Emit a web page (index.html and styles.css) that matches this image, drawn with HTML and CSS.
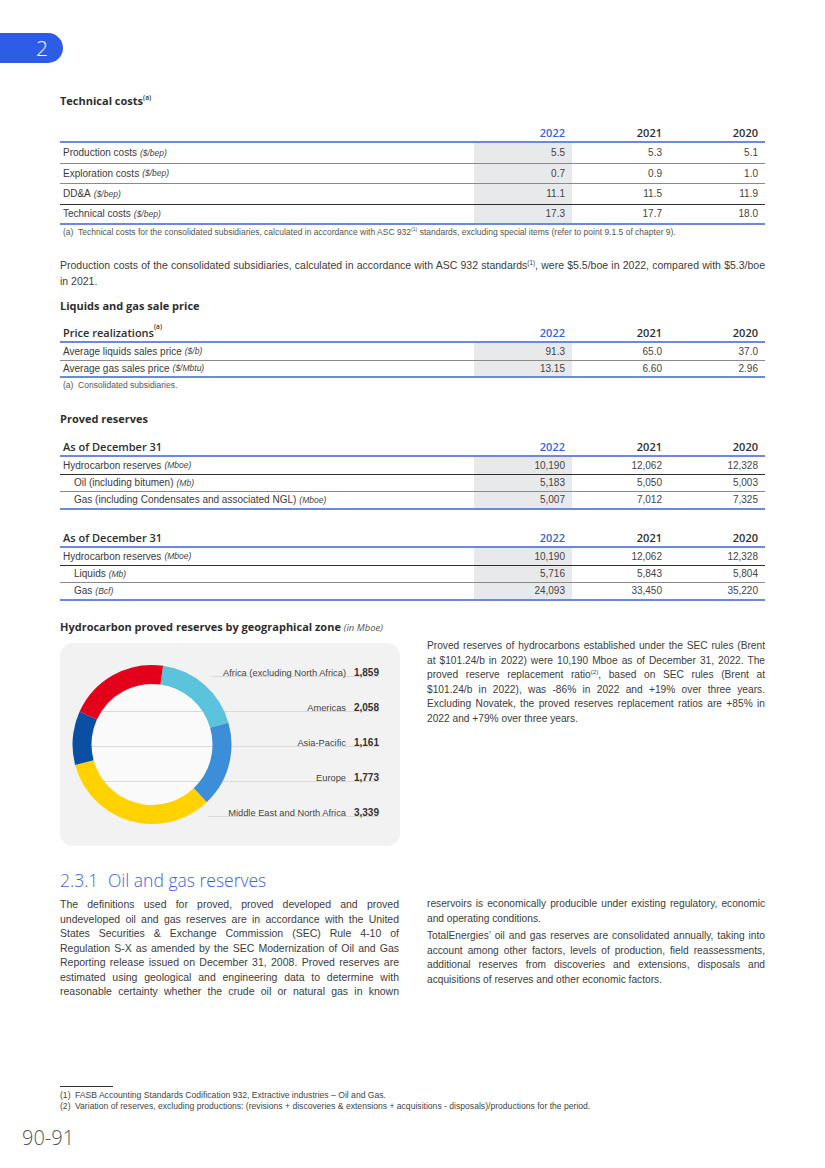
FILE: index.html
```html
<!DOCTYPE html>
<html lang="en">
<head>
<meta charset="utf-8">
<title>Oil and gas reserves</title>
<link rel="stylesheet" href="styles.css">
</head>
<body>
<div class="page">
  <div class="badge">2</div>

  <div class="content">
    <h3 class="h h-tech">Technical costs<sup>(a)</sup></h3>
    <div class="tbl t-tech">
      <div class="row head"><span class="lbl"></span><span class="c yr cur">2022</span><span class="c yr">2021</span><span class="c yr">2020</span></div>
      <div class="row"><span class="lbl">Production costs <i>($/bep)</i></span><span class="c cur">5.5</span><span class="c">5.3</span><span class="c">5.1</span></div>
      <div class="row"><span class="lbl">Exploration costs <i>($/bep)</i></span><span class="c cur">0.7</span><span class="c">0.9</span><span class="c">1.0</span></div>
      <div class="row dark"><span class="lbl">DD&amp;A <i>($/bep)</i></span><span class="c cur">11.1</span><span class="c">11.5</span><span class="c">11.9</span></div>
      <div class="row last"><span class="lbl">Technical costs <i>($/bep)</i></span><span class="c cur">17.3</span><span class="c">17.7</span><span class="c">18.0</span></div>
    </div>
    <p class="tnote">(a)&nbsp; Technical costs for the consolidated subsidiaries, calculated in accordance with ASC 932<sup>(1)</sup> standards, excluding special items (refer to point 9.1.5 of chapter 9).</p>

    <p class="para p-prod">Production costs of the consolidated subsidiaries, calculated in accordance with ASC 932 standards<sup>(1)</sup>, were $5.5/boe in 2022, compared with $5.3/boe in 2021.</p>

    <h3 class="h h-liq">Liquids and gas sale price</h3>
    <div class="tbl t-short t-price">
      <div class="row head"><span class="lbl">Price realizations<sup>(a)</sup></span><span class="c yr cur">2022</span><span class="c yr">2021</span><span class="c yr">2020</span></div>
      <div class="row"><span class="lbl">Average liquids sales price <i>($/b)</i></span><span class="c cur">91.3</span><span class="c">65.0</span><span class="c">37.0</span></div>
      <div class="row last"><span class="lbl">Average gas sales price <i>($/Mbtu)</i></span><span class="c cur">13.15</span><span class="c">6.60</span><span class="c">2.96</span></div>
    </div>
    <p class="tnote">(a)&nbsp; Consolidated subsidiaries.</p>

    <h3 class="h h-proved">Proved reserves</h3>
    <div class="tbl t-short t-res1">
      <div class="row head"><span class="lbl">As of December 31</span><span class="c yr cur">2022</span><span class="c yr">2021</span><span class="c yr">2020</span></div>
      <div class="row dark"><span class="lbl">Hydrocarbon reserves <i>(Mboe)</i></span><span class="c cur">10,190</span><span class="c">12,062</span><span class="c">12,328</span></div>
      <div class="row"><span class="lbl ind">Oil (including bitumen) <i>(Mb)</i></span><span class="c cur">5,183</span><span class="c">5,050</span><span class="c">5,003</span></div>
      <div class="row last"><span class="lbl ind">Gas (including Condensates and associated NGL) <i>(Mboe)</i></span><span class="c cur">5,007</span><span class="c">7,012</span><span class="c">7,325</span></div>
    </div>

    <div class="tbl t-short t-res2">
      <div class="row head"><span class="lbl">As of December 31</span><span class="c yr cur">2022</span><span class="c yr">2021</span><span class="c yr">2020</span></div>
      <div class="row dark"><span class="lbl">Hydrocarbon reserves <i>(Mboe)</i></span><span class="c cur">10,190</span><span class="c">12,062</span><span class="c">12,328</span></div>
      <div class="row"><span class="lbl ind">Liquids <i>(Mb)</i></span><span class="c cur">5,716</span><span class="c">5,843</span><span class="c">5,804</span></div>
      <div class="row last"><span class="lbl ind">Gas <i>(Bcf)</i></span><span class="c cur">24,093</span><span class="c">33,450</span><span class="c">35,220</span></div>
    </div>

    <div class="two chart-row">
      <div class="chart-col">
        <h3 class="h">Hydrocarbon proved reserves by geographical zone <i class="h-unit">(in Mboe)</i></h3>
        <div class="chart-box">
          <svg class="donut" width="340" height="203" viewBox="0 0 340 203">
            <circle cx="92" cy="101.5" r="60.5" fill="#fafafa"/>
            <g stroke="#d9d9d9" stroke-width="1">
              <line x1="152" y1="33.5" x2="319" y2="33.5"/>
              <line x1="30" y1="68.5" x2="319" y2="68.5"/>
              <line x1="26" y1="103.5" x2="319" y2="103.5"/>
              <line x1="30" y1="138.5" x2="319" y2="138.5"/>
              <line x1="148" y1="173.5" x2="319" y2="173.5"/>
            </g>
            <g fill="none" stroke-width="19" transform="rotate(-82 92 101.5)">
              <circle cx="92" cy="101.5" r="70" pathLength="360" stroke="#5bc3dc" stroke-dasharray="66 294" stroke-dashoffset="0"/>
              <circle cx="92" cy="101.5" r="70" pathLength="360" stroke="#3b8ed7" stroke-dasharray="62.5 297.5" stroke-dashoffset="-66"/>
              <circle cx="92" cy="101.5" r="70" pathLength="360" stroke="#ffd200" stroke-dasharray="118.5 241.5" stroke-dashoffset="-128.5"/>
              <circle cx="92" cy="101.5" r="70" pathLength="360" stroke="#0a4fa3" stroke-dasharray="39.5 320.5" stroke-dashoffset="-247"/>
              <circle cx="92" cy="101.5" r="70" pathLength="360" stroke="#e2001a" stroke-dasharray="73.5 286.5" stroke-dashoffset="-286.5"/>
            </g>
          </svg>
          <div class="legend">
            <div class="lg"><span class="lg-l">Africa (excluding North Africa)</span><span class="lg-v">1,859</span></div>
            <div class="lg"><span class="lg-l">Americas</span><span class="lg-v">2,058</span></div>
            <div class="lg"><span class="lg-l">Asia-Pacific</span><span class="lg-v">1,161</span></div>
            <div class="lg"><span class="lg-l">Europe</span><span class="lg-v">1,773</span></div>
            <div class="lg"><span class="lg-l">Middle East and North Africa</span><span class="lg-v">3,339</span></div>
          </div>
        </div>
      </div>
      <div class="text-col">
        <p class="para body rc p-proved">Proved reserves of hydrocarbons established under the SEC rules (Brent at $101.24/b in 2022) were 10,190 Mboe as of December 31, 2022. The proved reserve replacement ratio<sup>(2)</sup>, based on SEC rules (Brent at $101.24/b in 2022), was -86% in 2022 and +19% over three years. Excluding Novatek, the proved reserves replacement ratios are +85% in 2022 and +79% over three years.</p>
      </div>
    </div>

    <h2 class="sec"><span class="sec-n">2.3.1</span>Oil and gas reserves</h2>
    <div class="two sec-body">
      <div>
        <p class="para body cont">The definitions used for proved, proved developed and proved undeveloped oil and gas reserves are in accordance with the United States Securities &amp; Exchange Commission (SEC) Rule 4-10 of Regulation S-X as amended by the SEC Modernization of Oil and Gas Reporting release issued on December 31, 2008. Proved reserves are estimated using geological and engineering data to determine with reasonable certainty whether the crude oil or natural gas in known</p>
      </div>
      <div>
        <p class="para body rc">reservoirs is economically producible under existing regulatory, economic and operating conditions.</p>
        <p class="para body rc next">TotalEnergies’ oil and gas reserves are consolidated annually, taking into account among other factors, levels of production, field reassessments, additional reserves from discoveries and extensions, disposals and acquisitions of reserves and other economic factors.</p>
      </div>
    </div>

    <div class="fn-rule"></div>
    <ol class="fns">
      <li><span class="fn-n">(1)</span>FASB Accounting Standards Codification 932, Extractive industries – Oil and Gas.</li>
      <li><span class="fn-n">(2)</span>Variation of reserves, excluding productions: (revisions + discoveries &amp; extensions + acquisitions - disposals)/productions for the period.</li>
    </ol>
  </div>

  <div class="folio">90-91</div>
</div>
</body>
</html>
```

FILE: styles.css
```css
* { box-sizing: border-box; margin: 0; padding: 0; }

body {
  margin: 0;
  background: #fff;
  font-family: "Liberation Sans", Arial, sans-serif;
  color: #3c3c3c;
}

.page {
  width: 825px;
  height: 1168px;
  overflow: hidden;
}

.badge {
  margin-top: 33px;
  width: 63px;
  height: 30px;
  background: #2d5de6;
  border-radius: 0 15px 15px 0;
  color: #fff;
  font: 300 21px/30px "Open Sans", sans-serif;
  padding-left: 36px;
}

.content {
  padding-left: 60px;
  width: 765px;
}

sup {
  font-size: 0.6em;
  line-height: 1;
  vertical-align: baseline;
  position: relative;
  top: -0.7em;
}

.h {
  font: 700 11px/14px "Open Sans", sans-serif;
  color: #2e2e2e;
}
.h sup { font-weight: 600; }
.h-unit {
  font-weight: 400;
  font-size: 9.5px;
  color: #555;
}

.h-tech { margin-top: 31px; }
.h-liq { margin-top: 10px; }
.h-proved { margin-top: 21px; }

/* tables */
.tbl { width: 705px; }
.t-tech { margin-top: 15px; }
.t-price { margin-top: 10px; }
.t-res1 { margin-top: 11px; }
.t-res2 { margin-top: 18.5px; }

.row {
  display: grid;
  grid-template-columns: 1fr 98px 97px 96px;
  height: 20.5px;
  border-bottom: 1px solid #8a8a8a;
  font-size: 10px;
  color: #3a3a3a;
}
.t-short .row { height: 17.5px; }
.row.dark { border-bottom-color: #2e2e2e; }
.row.head {
  height: 20px;
  border-bottom: 2px solid #6d89de;
}
.row.last { border-bottom: 2px solid #6d89de; }

.lbl {
  display: flex;
  align-items: center;
  padding-left: 3px;
  white-space: nowrap;
}
.lbl.ind { padding-left: 14px; }
.lbl i {
  font-size: 8.5px;
  margin-left: 3px;
  color: #444;
}
.head .lbl {
  font: 600 11px "Open Sans", sans-serif;
  color: #2e2e2e;
}

.c {
  display: flex;
  align-items: center;
  justify-content: flex-end;
  padding-right: 7px;
  color: #444;
}
.c.cur { background: #e8e9ea; }
.head .c.cur { background: none; }
.c.yr {
  font: 600 11px "Open Sans", sans-serif;
  color: #2e2e2e;
}
.c.yr.cur { color: #3c5fd9; }

.tnote {
  font-size: 8.5px;
  line-height: 12px;
  color: #555;
  padding-left: 3px;
  margin-top: 1px;
}

.para {
  font-size: 10.5px;
  line-height: 15.5px;
  text-align: justify;
  color: #3c3c3c;
}
.p-prod { margin-top: 20px; }

.two {
  display: grid;
  grid-template-columns: 339px 338px;
  column-gap: 28px;
  width: 705px;
}
.chart-row { margin-top: 19.5px; }

.chart-box {
  position: relative;
  margin-top: 8px;
  width: 340px;
  height: 203px;
  background: #f2f2f2;
  border-radius: 13px;
}
.donut {
  position: absolute;
  left: 0;
  top: 0;
}
.legend {
  position: relative;
  padding-top: 5px;
  width: 319px;
  display: flex;
  flex-direction: column;
}
.lg {
  height: 35px;
  padding-top: 14px;
  display: flex;
  justify-content: flex-end;
  align-items: center;
  line-height: 14px;
}
.lg-l {
  font-size: 9.3px;
  color: #444;
}
.lg-v {
  width: 33px;
  text-align: right;
  font-weight: 700;
  font-size: 10px;
  color: #333;
}

.body {
  line-height: 14.5px;
}
.rc { font-size: 10.2px; }
.p-proved { margin-top: 19px; }

.sec {
  margin-top: 24px;
  font: 300 17.5px/20px "Open Sans", sans-serif;
  color: #3d62e2;
}
.sec-n {
  display: inline-block;
  width: 48px;
}

.sec-body { margin-top: 7px; }
.cont { text-align-last: justify; }
.next { margin-top: 3px; }

.fn-rule {
  margin-top: 87.5px;
  width: 53px;
  border-top: 1px solid #333;
}
.fns {
  list-style: none;
  margin-top: 2.5px;
  font-size: 8.6px;
  line-height: 11px;
  color: #444;
}
.fn-n {
  display: inline-block;
  width: 15px;
}

.folio {
  margin-top: 14.5px;
  padding-left: 22px;
  font: 300 20px/24px "Open Sans", sans-serif;
  color: #555;
}
```
